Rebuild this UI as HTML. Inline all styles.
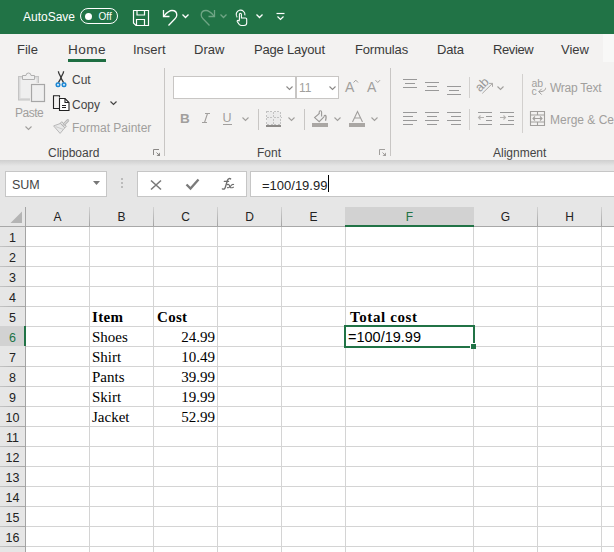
<!DOCTYPE html>
<html><head><meta charset="utf-8">
<style>
*{margin:0;padding:0;box-sizing:border-box}
html,body{width:614px;height:552px;overflow:hidden;background:#fff;font-family:"Liberation Sans",sans-serif}
.a{position:absolute}
.t{position:absolute;white-space:pre;line-height:1}
.tab{font-size:13px;color:#3a3a3a;top:43px}
.lbl{font-size:12px;color:#444}
.dis{color:#a19f9d}
.box{position:absolute;background:#fff;border:1px solid #c8c6c4}
.ch{position:absolute;top:211px;font-size:12px;color:#222;text-align:center;line-height:1}
.rh{position:absolute;left:0;width:25px;font-size:12.5px;color:#222;text-align:center;line-height:1}
.cell{position:absolute;font-family:"Liberation Serif",serif;font-size:15px;color:#000;line-height:1;white-space:pre}
</style></head><body>
<div class="a" style="left:0;top:0;width:614px;height:34px;background:#217346"></div>
<div class="t" style="left:23px;top:11px;font-size:12px;color:#fff">AutoSave</div>
<div class="a" style="left:80px;top:8px;width:38px;height:16px;border:1px solid #fff;border-radius:8px"></div>
<div class="a" style="left:84.5px;top:12.5px;width:7px;height:7px;border-radius:50%;background:#fff"></div>
<div class="t" style="left:98.5px;top:12px;font-size:10px;color:#fff">Off</div>
<svg class="a" style="left:132px;top:9px" width="18" height="18" viewBox="0 0 18 18" fill="none" stroke="#fff" stroke-width="1.2">
<path d="M1.5 1.5H16.5V16.5H4L1.5 14Z"/><path d="M5 1.5V6H12.5V1.5"/><path d="M4.5 16.5V10.5H12.5V16.5"/></svg>
<svg class="a" style="left:160px;top:8px" width="20" height="20" viewBox="0 0 20 20" fill="none" stroke="#fff" stroke-width="1.3">
<path d="M3.5 2V8.5H9.5"/><path d="M4 8C6.5 5 8.5 2.5 12 2.5C15 2.5 16.8 4.5 16.8 7C16.8 8.5 16 9.8 15 10.8L8.5 17.5"/></svg>
<svg class="a" style="left:181px;top:13px" width="9" height="6" viewBox="0 0 9 6" fill="none" stroke="#fff" stroke-width="1.3"><path d="M1.5 1.5L4.5 4.5L7.5 1.5"/></svg>
<svg class="a" style="left:198px;top:8px" width="20" height="20" viewBox="0 0 20 20" fill="none" stroke="#6fa585" stroke-width="1.3">
<path d="M16.5 2V8.5H10.5"/><path d="M16 8C13.5 5 11.5 2.5 8 2.5C5 2.5 3.2 4.5 3.2 7C3.2 8.5 4 9.8 5 10.8L11.5 17.5"/></svg>
<svg class="a" style="left:219px;top:13px" width="9" height="6" viewBox="0 0 9 6" fill="none" stroke="#6fa585" stroke-width="1.3"><path d="M1.5 1.5L4.5 4.5L7.5 1.5"/></svg>
<svg class="a" style="left:232px;top:6px" width="20" height="22" viewBox="0 0 20 22" fill="none" stroke="#fff" stroke-width="1.1">
<path d="M5.2 11.4A4.4 4.4 0 1 1 12.9 9.3"/><path d="M7.4 14.5V8.2A1 1 0 0 1 9.4 8.2V12H13.5A1.2 1.2 0 0 1 14.7 13.2V17C14.7 18.5 13.5 19.5 12 19.5H9.5C8.5 19.5 7.8 19 7.2 18.3L5.2 15.5A0.9 0.9 0 0 1 6.6 14.5L7.4 15.3"/></svg>
<svg class="a" style="left:255px;top:13px" width="9" height="6" viewBox="0 0 9 6" fill="none" stroke="#fff" stroke-width="1.3"><path d="M1.5 1.5L4.5 4.5L7.5 1.5"/></svg>
<svg class="a" style="left:275px;top:11px" width="11" height="10" viewBox="0 0 11 10" fill="none" stroke="#fff" stroke-width="1.2"><path d="M1.5 2.5H9.5"/><path d="M2.5 5.5L5.5 8.5L8.5 5.5"/></svg>
<div class="a" style="left:0;top:34px;width:614px;height:126px;background:#f3f2f1"></div>
<div class="a" style="left:603px;top:34px;width:11px;height:28px;background:#f8f8f7"></div>
<div class="t tab" style="left:17px;font-size:13px;letter-spacing:0px">File</div>
<div class="t tab" style="left:68px;font-size:13.6px;letter-spacing:0.4px">Home</div>
<div class="t tab" style="left:133px;font-size:13px;letter-spacing:0px">Insert</div>
<div class="t tab" style="left:194px;font-size:13px;letter-spacing:0px">Draw</div>
<div class="t tab" style="left:254px;font-size:13px;letter-spacing:-0.2px">Page Layout</div>
<div class="t tab" style="left:355px;font-size:13px;letter-spacing:-0.15px">Formulas</div>
<div class="t tab" style="left:437px;font-size:13px;letter-spacing:-0.2px">Data</div>
<div class="t tab" style="left:493px;font-size:13px;letter-spacing:-0.4px">Review</div>
<div class="t tab" style="left:561px;font-size:13px;letter-spacing:0px">View</div>
<div class="a" style="left:68px;top:59px;width:38px;height:3px;background:#1e6e42"></div>
<svg class="a" style="left:14px;top:68px" width="34" height="36" viewBox="0 0 34 36">
<rect x="4.5" y="8.5" width="20" height="23.5" fill="#dadada" stroke="#c4c4c4"/>
<rect x="6.5" y="10.5" width="16" height="19.5" fill="#efefef"/>
<path d="M8.5 7.5H12A2.5 2.5 0 0 1 17 7.5H20.5V11.5H8.5Z" fill="#efefef" stroke="#b0b0b0"/>
<rect x="16" y="15" width="16" height="20" fill="#f3f2f1"/>
<rect x="17.5" y="16.5" width="13" height="17" fill="#efefef" stroke="#a6a6a6" stroke-width="1.2"/>
</svg>
<div class="t lbl dis" style="left:15px;top:107px;letter-spacing:-0.5px">Paste</div>
<svg class="a" style="left:24px;top:125px" width="9" height="6" viewBox="0 0 9 6" fill="none" stroke="#a19f9d" stroke-width="1.1"><path d="M1.5 1.5L4.5 4.5L7.5 1.5"/></svg>
<svg class="a" style="left:54px;top:70px" width="14" height="18" viewBox="0 0 14 18" fill="none" stroke-width="1.1">
<path d="M4.4 1.2C4.4 4.5 7 6 7 8L9.6 12.6" stroke="#383838" stroke-width="1.3"/><path d="M9.6 1.2C9.6 4.5 7 6 7 8L4.4 12.6" stroke="#383838" stroke-width="1.3"/>
<rect x="2.2" y="12.9" width="3.6" height="3.6" rx="1.5" stroke="#1c87d4" stroke-width="1.5" fill="#d4e6f5"/><rect x="8.2" y="12.9" width="3.6" height="3.6" rx="1.5" stroke="#1c87d4" stroke-width="1.5" fill="#d4e6f5"/></svg>
<div class="t lbl" style="left:72px;top:74px">Cut</div>
<svg class="a" style="left:52px;top:94px" width="18" height="18" viewBox="0 0 18 18" fill="none" stroke="#222" stroke-width="1.1">
<path d="M7.5 3.5V1.8H1.5V14.5H7"/><path d="M7.5 4.5H13L17 8.5V16.5H7.5Z" fill="#fff"/><path d="M13 4.5V8.5H17"/><path d="M10 11.5H14M10 13.5H14"/></svg>
<div class="t lbl" style="left:72px;top:99px">Copy</div>
<svg class="a" style="left:109px;top:100px" width="9" height="6" viewBox="0 0 9 6" fill="none" stroke="#444" stroke-width="1.2"><path d="M1.5 1.5L4.5 4.5L7.5 1.5"/></svg>
<svg class="a" style="left:50px;top:116px" width="22" height="20" viewBox="0 0 22 20">
<path d="M11.2 7.2L3.6 9.9L10.1 17.4L15 11.6Z" fill="#e9e9e9" stroke="#b9b9b9" stroke-width="1" stroke-linejoin="round"/>
<path d="M5.6 10.6L13.6 13.5" stroke="#c6c6c6" stroke-width="0.9"/>
<path d="M10.2 7.3L11.8 5.7L16.3 10.2L14.7 11.8Z" fill="#e2e2e2" stroke="#b2b2b2" stroke-width="1"/>
<path d="M14.2 8.2L17.8 4.6" stroke="#b4b4b4" stroke-width="2.8" stroke-linecap="round"/><path d="M14.2 8.2L17.8 4.6" stroke="#f0f0f0" stroke-width="0.9" stroke-linecap="round"/></svg>
<div class="t lbl dis" style="left:72px;top:122px">Format Painter</div>
<div class="t lbl" style="left:48px;top:147px">Clipboard</div>
<svg class="a" style="left:153px;top:149px" width="9" height="9" viewBox="0 0 9 9" fill="none" stroke="#8a8886" stroke-width="1"><path d="M0.5 6V0.5H6"/><path d="M3.5 3.5L6 6"/><path d="M7 3.5V7H3.5Z" fill="#8a8886" stroke="none"/></svg>
<div class="a" style="left:164px;top:68px;width:1px;height:88px;background:#c8c6c4"></div>
<div class="box" style="left:173px;top:76px;width:123px;height:23px"></div>
<div class="box" style="left:296px;top:76px;width:43px;height:23px"></div>
<svg class="a" style="left:285px;top:85px" width="9" height="6" viewBox="0 0 9 6" fill="none" stroke="#8a8886" stroke-width="1.1"><path d="M1.5 1.5L4.5 4.5L7.5 1.5"/></svg>
<div class="t" style="left:299px;top:82px;font-size:12px;color:#a19f9d">11</div>
<svg class="a" style="left:328px;top:85px" width="9" height="6" viewBox="0 0 9 6" fill="none" stroke="#8a8886" stroke-width="1.1"><path d="M1.5 1.5L4.5 4.5L7.5 1.5"/></svg>
<div class="t" style="left:345px;top:80px;font-size:14px;color:#a19f9d">A</div>
<svg class="a" style="left:353px;top:79px" width="6" height="5" viewBox="0 0 6 5" fill="none" stroke="#a19f9d" stroke-width="1"><path d="M0.5 3.5L2.8 1.2L5 3.5"/></svg>
<div class="t" style="left:367px;top:80px;font-size:14px;color:#a19f9d">A</div>
<svg class="a" style="left:375px;top:79px" width="6" height="5" viewBox="0 0 6 5" fill="none" stroke="#a19f9d" stroke-width="1"><path d="M0.5 1.2L2.8 3.5L5 1.2"/></svg>
<div class="t" style="left:180px;top:112px;font-size:13.5px;font-weight:bold;color:#a19f9d">B</div>
<svg class="a" style="left:201px;top:112px" width="10" height="12" viewBox="0 0 10 12" fill="none" stroke="#a19f9d" stroke-width="1.1"><path d="M4 1.5H9M1 10.5H6M6.5 1.5L3.5 10.5"/></svg>
<div class="t" style="left:222.5px;top:112px;font-size:12.5px;color:#a19f9d">U</div>
<div class="a" style="left:223px;top:124px;width:9px;height:1px;background:#a19f9d"></div>
<svg class="a" style="left:241px;top:116px" width="9" height="6" viewBox="0 0 9 6" fill="none" stroke="#a19f9d" stroke-width="1.1"><path d="M1.5 1.5L4.5 4.5L7.5 1.5"/></svg>
<div class="a" style="left:258px;top:109px;width:1px;height:21px;background:#c8c6c4"></div>
<svg class="a" style="left:265px;top:110px" width="18" height="18" viewBox="0 0 18 18" fill="none" stroke="#c2c2c2" stroke-width="1" stroke-dasharray="2 1.5" shape-rendering="crispEdges">
<rect x="1.5" y="1.5" width="14" height="13" fill="#ebebeb" stroke="none"/>
<path d="M1.5 1.5H15.5V14.5H1.5Z"/><path d="M8.5 1.5V14.5M1.5 7.5H16.5"/></svg>
<div class="a" style="left:266px;top:125px;width:15px;height:2px;background:#8c8a88"></div>
<svg class="a" style="left:287px;top:116px" width="9" height="6" viewBox="0 0 9 6" fill="none" stroke="#a19f9d" stroke-width="1.1"><path d="M1.5 1.5L4.5 4.5L7.5 1.5"/></svg>
<div class="a" style="left:304px;top:109px;width:1px;height:21px;background:#c8c6c4"></div>
<svg class="a" style="left:310px;top:106px" width="22" height="17" viewBox="0 0 22 17" fill="none" stroke="#9a9896" stroke-width="1.1">
<path d="M9.2 7.6L4.6 11.6L9.2 15.7L14 10.8L11.6 8.2Z" fill="#efefef" stroke="none"/>
<path d="M9.2 7.6L4.6 11.6L9.2 15.7L14 10.8"/><path d="M9.2 8V6A1.2 1.2 0 0 1 11.6 6V10.6"/>
<path d="M14 10.6C14.3 9.2 15.6 9 16 10.3C16.3 11.8 15.9 13.5 15.5 14.7" stroke-width="1.3"/></svg>
<div class="a" style="left:312px;top:123px;width:16px;height:4px;background:#aaa7a4"></div>
<svg class="a" style="left:333px;top:116px" width="9" height="6" viewBox="0 0 9 6" fill="none" stroke="#a19f9d" stroke-width="1.1"><path d="M1.5 1.5L4.5 4.5L7.5 1.5"/></svg>
<svg class="a" style="left:351px;top:110px" width="13" height="13" viewBox="0 0 13 13" fill="none" stroke="#a19f9d" stroke-width="1.1"><path d="M1.5 12L6.5 1.5L11.5 12M3.5 8H9.5"/></svg>
<div class="a" style="left:349px;top:123px;width:16px;height:4px;background:#aaa7a4"></div>
<svg class="a" style="left:370px;top:116px" width="9" height="6" viewBox="0 0 9 6" fill="none" stroke="#a19f9d" stroke-width="1.1"><path d="M1.5 1.5L4.5 4.5L7.5 1.5"/></svg>
<div class="t lbl" style="left:257px;top:147px">Font</div>
<svg class="a" style="left:379px;top:149px" width="9" height="9" viewBox="0 0 9 9" fill="none" stroke="#a19f9d" stroke-width="1"><path d="M0.5 6V0.5H6"/><path d="M3.5 3.5L6 6"/><path d="M7 3.5V7H3.5Z" fill="#a19f9d" stroke="none"/></svg>
<div class="a" style="left:390px;top:68px;width:1px;height:88px;background:#c8c6c4"></div>
<div class="a" style="left:403px;top:79px;width:14px;height:1px;background:#999"></div>
<div class="a" style="left:405px;top:83px;width:10px;height:1px;background:#999"></div>
<div class="a" style="left:403px;top:87px;width:14px;height:1px;background:#999"></div>
<div class="a" style="left:425px;top:82px;width:14px;height:1px;background:#999"></div>
<div class="a" style="left:427px;top:86px;width:10px;height:1px;background:#999"></div>
<div class="a" style="left:425px;top:90px;width:14px;height:1px;background:#999"></div>
<div class="a" style="left:447px;top:86px;width:14px;height:1px;background:#999"></div>
<div class="a" style="left:449px;top:90px;width:10px;height:1px;background:#999"></div>
<div class="a" style="left:447px;top:94px;width:14px;height:1px;background:#999"></div>
<div class="a" style="left:403px;top:112px;width:14px;height:1px;background:#999"></div>
<div class="a" style="left:403px;top:116px;width:10px;height:1px;background:#999"></div>
<div class="a" style="left:403px;top:120px;width:14px;height:1px;background:#999"></div>
<div class="a" style="left:403px;top:124px;width:10px;height:1px;background:#999"></div>
<div class="a" style="left:425px;top:112px;width:14px;height:1px;background:#999"></div>
<div class="a" style="left:427px;top:116px;width:10px;height:1px;background:#999"></div>
<div class="a" style="left:425px;top:120px;width:14px;height:1px;background:#999"></div>
<div class="a" style="left:427px;top:124px;width:10px;height:1px;background:#999"></div>
<div class="a" style="left:447px;top:112px;width:14px;height:1px;background:#999"></div>
<div class="a" style="left:451px;top:116px;width:10px;height:1px;background:#999"></div>
<div class="a" style="left:447px;top:120px;width:14px;height:1px;background:#999"></div>
<div class="a" style="left:451px;top:124px;width:10px;height:1px;background:#999"></div>
<div class="a" style="left:478px;top:112px;width:14px;height:1px;background:#999"></div>
<div class="a" style="left:486px;top:116px;width:6px;height:1px;background:#999"></div>
<div class="a" style="left:486px;top:120px;width:6px;height:1px;background:#999"></div>
<div class="a" style="left:478px;top:124px;width:14px;height:1px;background:#999"></div>
<div class="a" style="left:500px;top:112px;width:14px;height:1px;background:#999"></div>
<div class="a" style="left:508px;top:116px;width:6px;height:1px;background:#999"></div>
<div class="a" style="left:508px;top:120px;width:6px;height:1px;background:#999"></div>
<div class="a" style="left:500px;top:124px;width:14px;height:1px;background:#999"></div>
<svg class="a" style="left:477px;top:113px" width="10" height="9" viewBox="0 0 10 9" fill="none" stroke="#b5b3b1" stroke-width="1.1"><path d="M7 4.5H1.5M3.5 2.5L1.5 4.5L3.5 6.5"/></svg>
<svg class="a" style="left:499px;top:113px" width="10" height="9" viewBox="0 0 10 9" fill="none" stroke="#b5b3b1" stroke-width="1.1"><path d="M1 4.5H6.5M4.5 2.5L6.5 4.5L4.5 6.5"/></svg>
<div class="a" style="left:469px;top:77px;width:1px;height:21px;background:#d2d0ce"></div>
<div class="a" style="left:469px;top:109px;width:1px;height:21px;background:#d2d0ce"></div>
<svg class="a" style="left:475px;top:76px" width="22" height="20" viewBox="0 0 22 20" fill="none" stroke="#a19f9d" stroke-width="1.1">
<text x="-0.5" y="12.5" font-size="12.5" fill="#999" stroke="none" transform="rotate(-45 7 8)" font-family="Liberation Sans">ab</text>
<path d="M7.3 17.4L17.3 7.6M14 7.4H17.5V10.8" stroke-width="0.9"/></svg>
<svg class="a" style="left:496px;top:85px" width="9" height="6" viewBox="0 0 9 6" fill="none" stroke="#a19f9d" stroke-width="1.1"><path d="M1.5 1.5L4.5 4.5L7.5 1.5"/></svg>
<div class="a" style="left:522px;top:74px;width:1px;height:59px;background:#d2d0ce"></div>
<svg class="a" style="left:531px;top:79px" width="16" height="17" viewBox="0 0 16 17" fill="none" stroke="#a19f9d" stroke-width="1.1">
<text x="0.5" y="8" font-size="10.5" fill="#a19f9d" stroke="none" font-family="Liberation Sans">ab</text>
<text x="0.5" y="15.5" font-size="10.5" fill="#a19f9d" stroke="none" font-family="Liberation Sans">c</text>
<path d="M14.6 8.8C14.6 11 13 12.7 7.8 12.7M10.7 9.8L7.8 12.7L10.7 15.6" stroke-width="1"/></svg>
<div class="t lbl dis" style="left:550px;top:82px;letter-spacing:-0.25px">Wrap Text</div>
<svg class="a" style="left:529px;top:110px" width="17" height="17" viewBox="0 0 17 17" fill="none" stroke="#a19f9d" stroke-width="1.1">
<path d="M1.5 1.5H15.5V15.5H1.5Z"/><path d="M1.5 5H15.5M1.5 12H15.5M8.5 1.5V5M8.5 12V15.5"/><path d="M4 8.5H13M6 6.5L4 8.5L6 10.5M11 6.5L13 8.5L11 10.5"/></svg>
<div class="t lbl dis" style="left:550px;top:114px">Merge &amp; Center</div>
<div class="t lbl" style="left:493px;top:147px">Alignment</div>
<div class="a" style="left:0;top:160px;width:614px;height:47px;background:#e6e6e6"></div>
<div class="a" style="left:0;top:160px;width:614px;height:6px;background:linear-gradient(#cfcfcf,#e6e6e6)"></div>
<div class="box" style="left:5px;top:171px;width:102px;height:26px;border-color:#c6c6c6"></div>
<div class="t" style="left:12px;top:179px;font-size:12.5px;color:#444">SUM</div>
<svg class="a" style="left:92px;top:180px" width="9" height="6" viewBox="0 0 9 6"><path d="M1 1H8L4.5 5Z" fill="#777"/></svg>
<div class="a" style="left:121px;top:178px;width:2px;height:2px;background:#bbb"></div>
<div class="a" style="left:121px;top:182px;width:2px;height:2px;background:#bbb"></div>
<div class="a" style="left:121px;top:186px;width:2px;height:2px;background:#bbb"></div>
<div class="box" style="left:137px;top:171px;width:110px;height:26px;border-color:#c6c6c6"></div>
<svg class="a" style="left:149px;top:179px" width="14" height="12" viewBox="0 0 14 12" fill="none" stroke="#7a7a7a" stroke-width="1.6"><path d="M2 1.5L12 10.5M12 1.5L2 10.5"/></svg>
<svg class="a" style="left:185px;top:178px" width="15" height="13" viewBox="0 0 15 13" fill="none" stroke="#7a7a7a" stroke-width="2.3"><path d="M1.5 6.5L5.5 10.5L13.5 1.5"/></svg>
<svg class="a" style="left:214px;top:172px" width="26" height="22" viewBox="0 0 26 22" fill="none" stroke="#6e6e6e" stroke-linecap="round"><path d="M16.6 6.9C15.8 6.2 14.2 6.3 13.5 8.2L11.2 15.6C10.8 17 9.6 17.5 8.4 16.9" stroke-width="1.4"/><path d="M10.3 9.4H14.6" stroke-width="1.2"/><path d="M13.4 12.6C14.4 12.1 15 12.6 15.4 13.6L16.2 15.2C16.6 16 17.6 15.9 19.4 15.2" stroke-width="1.2"/><path d="M19.6 12.5C18.6 12.2 17.6 12.8 16.8 13.8L15.4 15.2C14.8 15.8 14.2 15.8 13.4 15.6" stroke-width="1.1"/></svg>
<div class="box" style="left:250px;top:171px;width:370px;height:26px;border-color:#c6c6c6"></div>
<div class="t" style="left:262px;top:179px;font-size:13px;color:#222">=100/19.99</div>
<div class="a" style="left:328px;top:175px;width:1px;height:17px;background:#000"></div>
<div class="a" style="left:0;top:207px;width:614px;height:20px;background:#e6e6e6"></div>
<div class="a" style="left:0;top:207px;width:25px;height:345px;background:#e6e6e6"></div>
<div class="a" style="left:345px;top:207px;width:129px;height:19px;background:#d2d2d2"></div>
<div class="a" style="left:0;top:326px;width:25px;height:20px;background:#d2d2d2"></div>
<svg class="a" style="left:9px;top:210px" width="14" height="14" viewBox="0 0 14 14"><path d="M13 1.5V13H1.5Z" fill="#b4b4b4"/></svg>
<div class="a" style="left:89px;top:207px;width:1px;height:19px;background:linear-gradient(#d2d2d2,#a4a4a4)"></div>
<div class="a" style="left:153px;top:207px;width:1px;height:19px;background:linear-gradient(#d2d2d2,#a4a4a4)"></div>
<div class="a" style="left:217px;top:207px;width:1px;height:19px;background:linear-gradient(#d2d2d2,#a4a4a4)"></div>
<div class="a" style="left:281px;top:207px;width:1px;height:19px;background:linear-gradient(#d2d2d2,#a4a4a4)"></div>
<div class="a" style="left:537px;top:207px;width:1px;height:19px;background:linear-gradient(#d2d2d2,#a4a4a4)"></div>
<div class="a" style="left:601px;top:207px;width:1px;height:19px;background:linear-gradient(#d2d2d2,#a4a4a4)"></div>
<div class="a" style="left:89px;top:227px;width:1px;height:325px;background:#d4d4d4"></div>
<div class="a" style="left:153px;top:227px;width:1px;height:325px;background:#d4d4d4"></div>
<div class="a" style="left:217px;top:227px;width:1px;height:325px;background:#d4d4d4"></div>
<div class="a" style="left:281px;top:227px;width:1px;height:325px;background:#d4d4d4"></div>
<div class="a" style="left:345px;top:227px;width:1px;height:325px;background:#d4d4d4"></div>
<div class="a" style="left:473px;top:227px;width:1px;height:325px;background:#d4d4d4"></div>
<div class="a" style="left:537px;top:227px;width:1px;height:325px;background:#d4d4d4"></div>
<div class="a" style="left:601px;top:227px;width:1px;height:325px;background:#d4d4d4"></div>
<div class="a" style="left:26px;top:246px;width:588px;height:1px;background:#d4d4d4"></div>
<div class="a" style="left:0;top:246px;width:25px;height:1px;background:linear-gradient(to right,#c4c4c4,#a6a6a6)"></div>
<div class="a" style="left:26px;top:266px;width:588px;height:1px;background:#d4d4d4"></div>
<div class="a" style="left:0;top:266px;width:25px;height:1px;background:linear-gradient(to right,#c4c4c4,#a6a6a6)"></div>
<div class="a" style="left:26px;top:286px;width:588px;height:1px;background:#d4d4d4"></div>
<div class="a" style="left:0;top:286px;width:25px;height:1px;background:linear-gradient(to right,#c4c4c4,#a6a6a6)"></div>
<div class="a" style="left:26px;top:306px;width:588px;height:1px;background:#d4d4d4"></div>
<div class="a" style="left:0;top:306px;width:25px;height:1px;background:linear-gradient(to right,#c4c4c4,#a6a6a6)"></div>
<div class="a" style="left:26px;top:326px;width:588px;height:1px;background:#d4d4d4"></div>
<div class="a" style="left:26px;top:346px;width:588px;height:1px;background:#d4d4d4"></div>
<div class="a" style="left:26px;top:366px;width:588px;height:1px;background:#d4d4d4"></div>
<div class="a" style="left:0;top:366px;width:25px;height:1px;background:linear-gradient(to right,#c4c4c4,#a6a6a6)"></div>
<div class="a" style="left:26px;top:386px;width:588px;height:1px;background:#d4d4d4"></div>
<div class="a" style="left:0;top:386px;width:25px;height:1px;background:linear-gradient(to right,#c4c4c4,#a6a6a6)"></div>
<div class="a" style="left:26px;top:406px;width:588px;height:1px;background:#d4d4d4"></div>
<div class="a" style="left:0;top:406px;width:25px;height:1px;background:linear-gradient(to right,#c4c4c4,#a6a6a6)"></div>
<div class="a" style="left:26px;top:426px;width:588px;height:1px;background:#d4d4d4"></div>
<div class="a" style="left:0;top:426px;width:25px;height:1px;background:linear-gradient(to right,#c4c4c4,#a6a6a6)"></div>
<div class="a" style="left:26px;top:446px;width:588px;height:1px;background:#d4d4d4"></div>
<div class="a" style="left:0;top:446px;width:25px;height:1px;background:linear-gradient(to right,#c4c4c4,#a6a6a6)"></div>
<div class="a" style="left:26px;top:466px;width:588px;height:1px;background:#d4d4d4"></div>
<div class="a" style="left:0;top:466px;width:25px;height:1px;background:linear-gradient(to right,#c4c4c4,#a6a6a6)"></div>
<div class="a" style="left:26px;top:486px;width:588px;height:1px;background:#d4d4d4"></div>
<div class="a" style="left:0;top:486px;width:25px;height:1px;background:linear-gradient(to right,#c4c4c4,#a6a6a6)"></div>
<div class="a" style="left:26px;top:506px;width:588px;height:1px;background:#d4d4d4"></div>
<div class="a" style="left:0;top:506px;width:25px;height:1px;background:linear-gradient(to right,#c4c4c4,#a6a6a6)"></div>
<div class="a" style="left:26px;top:526px;width:588px;height:1px;background:#d4d4d4"></div>
<div class="a" style="left:0;top:526px;width:25px;height:1px;background:linear-gradient(to right,#c4c4c4,#a6a6a6)"></div>
<div class="a" style="left:26px;top:546px;width:588px;height:1px;background:#d4d4d4"></div>
<div class="a" style="left:0;top:546px;width:25px;height:1px;background:linear-gradient(to right,#c4c4c4,#a6a6a6)"></div>
<div class="a" style="left:0px;top:226px;width:614px;height:1px;background:#a8a8a8"></div>
<div class="a" style="left:25px;top:207px;width:1px;height:345px;background:#a4a4a4"></div>
<div class="a" style="left:345px;top:225px;width:129px;height:2px;background:#217346"></div>
<div class="a" style="left:24px;top:326px;width:2px;height:20px;background:#217346"></div>
<div class="ch" style="left:26px;width:63px;color:#222">A</div>
<div class="ch" style="left:90px;width:63px;color:#222">B</div>
<div class="ch" style="left:154px;width:63px;color:#222">C</div>
<div class="ch" style="left:218px;width:63px;color:#222">D</div>
<div class="ch" style="left:282px;width:63px;color:#222">E</div>
<div class="ch" style="left:346px;width:127px;color:#217346">F</div>
<div class="ch" style="left:474px;width:63px;color:#222">G</div>
<div class="ch" style="left:538px;width:63px;color:#222">H</div>
<div class="rh" style="top:232px;color:#222">1</div>
<div class="rh" style="top:252px;color:#222">2</div>
<div class="rh" style="top:272px;color:#222">3</div>
<div class="rh" style="top:292px;color:#222">4</div>
<div class="rh" style="top:312px;color:#222">5</div>
<div class="rh" style="top:332px;color:#217346">6</div>
<div class="rh" style="top:352px;color:#222">7</div>
<div class="rh" style="top:372px;color:#222">8</div>
<div class="rh" style="top:392px;color:#222">9</div>
<div class="rh" style="top:412px;color:#222">10</div>
<div class="rh" style="top:432px;color:#222">11</div>
<div class="rh" style="top:452px;color:#222">12</div>
<div class="rh" style="top:472px;color:#222">13</div>
<div class="rh" style="top:492px;color:#222">14</div>
<div class="rh" style="top:512px;color:#222">15</div>
<div class="rh" style="top:532px;color:#222">16</div>
<div class="cell" style="left:92px;top:310px;font-weight:bold;letter-spacing:0.3px">Item</div>
<div class="cell" style="left:157px;top:310px;font-weight:bold;letter-spacing:0.3px">Cost</div>
<div class="cell" style="left:92px;top:330px">Shoes</div>
<div class="cell" style="right:399px;top:330px">24.99</div>
<div class="cell" style="left:92px;top:350px">Shirt</div>
<div class="cell" style="right:399px;top:350px">10.49</div>
<div class="cell" style="left:92px;top:370px">Pants</div>
<div class="cell" style="right:399px;top:370px">39.99</div>
<div class="cell" style="left:92px;top:390px">Skirt</div>
<div class="cell" style="right:399px;top:390px">19.99</div>
<div class="cell" style="left:92px;top:410px">Jacket</div>
<div class="cell" style="right:399px;top:410px">52.99</div>
<div class="cell" style="left:350px;top:310px;font-weight:bold;letter-spacing:0.6px">Total cost</div>
<div class="t" style="left:348px;top:330px;font-size:14.5px;color:#000">=100/19.99</div>
<div class="a" style="left:344px;top:325px;width:131px;height:23px;border:2px solid #217346"></div>
<div class="a" style="left:470px;top:343px;width:6px;height:6px;background:#fff"></div>
<div class="a" style="left:471px;top:344px;width:5px;height:5px;background:#217346"></div>
</body></html>
